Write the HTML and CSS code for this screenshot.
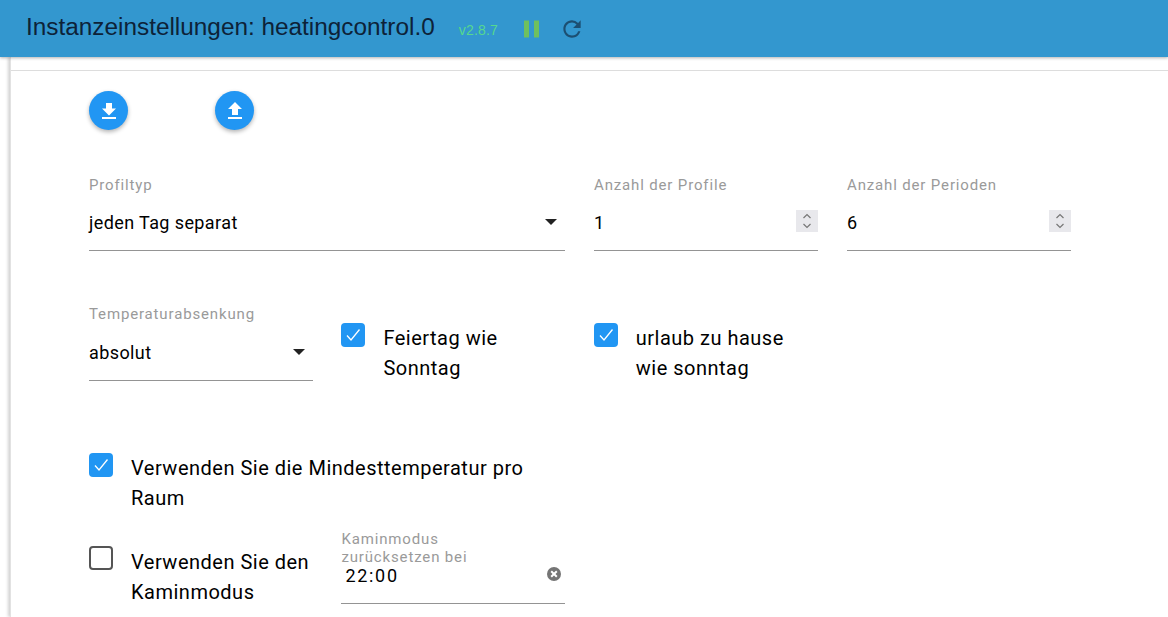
FILE: index.html
```html
<!DOCTYPE html>
<html lang="de">
<head>
<meta charset="utf-8">
<title>Instanzeinstellungen</title>
<link rel="stylesheet" href="styles.css">
</head>
<body>
<header class="topbar">
  <h1 class="title">Instanzeinstellungen: heatingcontrol.0</h1>
  <span class="version">v2.8.7</span>
  <svg class="pause" width="18" height="18" viewBox="0 0 18 18"><rect x="1" y="0.5" width="5" height="17" fill="#6fc05e"/><rect x="11" y="0.5" width="5" height="17" fill="#6fc05e"/></svg>
  <svg class="reload" width="26" height="26" viewBox="0 0 24 24"><path fill="#1c4f72" d="M17.65 6.35A7.958 7.958 0 0 0 12 4c-4.42 0-7.99 3.58-7.99 8s3.57 8 7.99 8c3.73 0 6.84-2.55 7.73-6h-2.08A5.99 5.99 0 0 1 12 18c-3.31 0-6-2.69-6-6s2.69-6 6-6c1.66 0 3.14.69 4.22 1.78L13 11h7V4l-2.35 2.35z"/></svg>
</header>
<div class="sheet">
  <div class="tabline"></div>
  <main class="content">
    <div class="fabs">
      <button class="fab" type="button"><svg width="24" height="24" viewBox="0 0 24 24"><path fill="#fff" d="M19 9.5h-4V4H9v5.5H5l7 7 7-7zM5 18v2h14v-2H5z"/></svg></button>
      <button class="fab" type="button"><svg width="24" height="24" viewBox="0 0 24 24"><path fill="#fff" d="M9 16h6v-6h4l-7-7-7 7h4v6zm-4 2h14v2H5v-2z"/></svg></button>
    </div>
    <div class="row row-one">
      <div class="field">
        <label class="label">Profiltyp</label>
        <div class="control"><span>jeden Tag separat</span><i class="caret"></i></div>
      </div>
      <div class="field">
        <label class="label">Anzahl der Profile</label>
        <div class="control"><span>1</span><span class="spin"><svg width="12" height="20" viewBox="0 0 12 20"><path fill="none" stroke="#777" stroke-width="1.2" d="M2.5 7 6 3.5 9.500 7M2.500 13 6 16.500 9.500 13"/></svg></span></div>
      </div>
      <div class="field">
        <label class="label">Anzahl der Perioden</label>
        <div class="control"><span>6</span><span class="spin"><svg width="12" height="20" viewBox="0 0 12 20"><path fill="none" stroke="#777" stroke-width="1.2" d="M2.5 7 6 3.5 9.500 7M2.500 13 6 16.500 9.500 13"/></svg></span></div>
      </div>
    </div>
    <div class="row row-two">
      <div class="field">
        <label class="label">Temperaturabsenkung</label>
        <div class="control"><span>absolut</span><i class="caret"></i></div>
      </div>
      <div class="check">
        <span class="box on"><svg width="24" height="24" viewBox="0 0 24 24"><path fill="none" stroke="#fff" stroke-width="1.3" d="M6 12.500 10 17 18.500 6.500"/></svg></span>
        <span class="check-text">Feiertag wie Sonntag</span>
      </div>
      <div class="check">
        <span class="box on"><svg width="24" height="24" viewBox="0 0 24 24"><path fill="none" stroke="#fff" stroke-width="1.3" d="M6 12.500 10 17 18.500 6.500"/></svg></span>
        <span class="check-text">urlaub zu hause wie sonntag</span>
      </div>
    </div>
    <div class="row row-three">
      <div class="check">
        <span class="box on"><svg width="24" height="24" viewBox="0 0 24 24"><path fill="none" stroke="#fff" stroke-width="1.3" d="M6 12.500 10 17 18.500 6.500"/></svg></span>
        <span class="check-text">Verwenden Sie die Mindesttemperatur pro Raum</span>
      </div>
    </div>
    <div class="row row-four">
      <div class="check">
        <span class="box"></span>
        <span class="check-text">Verwenden Sie den Kaminmodus</span>
      </div>
      <div class="field">
        <label class="label label-multi">Kaminmodus<br>zurücksetzen bei</label>
        <div class="control time"><span class="time-value">22:00</span>
          <svg class="clear" width="16" height="16" viewBox="0 0 16 16"><circle cx="8" cy="8" r="7" fill="#757575"/><path stroke="#fff" stroke-width="2" d="M5.200 5.200l5.600 5.600M10.800 5.200l-5.600 5.600"/></svg>
        </div>
      </div>
    </div>
  </main>
</div>
</body>
</html>
```

FILE: styles.css
```css
* { box-sizing: border-box; }
html, body { margin: 0; height: 100%; overflow: hidden; background: #fff; }
body { font-family: Roboto, "Noto Sans", sans-serif; color: #000; }

.topbar {
  height: 57px;
  background: #3397cf;
  display: flex;
  align-items: center;
  padding-left: 26px;
  position: relative;
  z-index: 2;
  box-shadow: 0 1px 3px rgba(0,0,0,.3);
}
.title {
  margin: 0;
  font: 400 24.35px "Liberation Sans", Arial, sans-serif;
  color: #0d2238;
  position: relative;
  top: -2px;
}
.version {
  margin-left: 24px;
  font: 400 14px "Liberation Sans", Arial, sans-serif;
  color: #56d88e;
  letter-spacing: .2px;
  position: relative;
  top: 1px;
}
.pause { margin-left: 25px; }
.reload { margin-left: 18px; }

.sheet {
  margin-left: 10px;
  height: 560px;
  background: #fff;
  border-left: 1px solid #e2e2e2;
  box-shadow: -2px 0 3px rgba(0,0,0,.18);
}
.tabline { height: 14px; border-bottom: 1px solid #ddd; }
.content { padding: 20px 0 0 78px; }

.fabs { display: flex; gap: 87px; }
.fab {
  width: 39px;
  height: 39px;
  border: 0;
  padding: 0;
  border-radius: 50%;
  background: #2196f3;
  box-shadow: 0 2px 4px rgba(0,0,0,.3);
  display: flex;
  align-items: center;
  justify-content: center;
}

.row { display: grid; column-gap: 28.4px; }
.row-one { grid-template-columns: 476px 224px 224px; column-gap: 29px; margin-top: 45px; }
.row-two { grid-template-columns: repeat(3, 224px); margin-top: 53px; }
.row-three { grid-template-columns: 476px; margin-top: 70px; }
.row-four { grid-template-columns: repeat(2, 224px); margin-top: 15px; }

.field { display: flex; flex-direction: column; }
.label {
  font-size: 15px;
  line-height: 20px;
  height: 20px;
  color: #9a9a9a;
  letter-spacing: .85px;
}
.control {
  height: 56px;
  display: flex;
  align-items: center;
  justify-content: space-between;
  font-size: 18px;
  letter-spacing: .4px;
  border-bottom: 1px solid #949494;
}
.row-two .control { height: 57px; }
.caret {
  width: 0;
  height: 0;
  margin-right: 8px;
  margin-top: -1px;
  border-left: 6px solid transparent;
  border-right: 6px solid transparent;
  border-top: 6px solid #222;
}
.spin {
  width: 22px;
  height: 22px;
  margin-top: -3px;
  background: #e8e8ec;
  display: flex;
  align-items: center;
  justify-content: center;
}
.check { display: flex; align-items: flex-start; }
.row-two .check { padding-top: 19px; }
.box {
  flex: none;
  width: 24px;
  height: 24px;
  border-radius: 4px;
  border: 2px solid #555;
  display: block;
}
.box.on { background: #2196f3; border: 0; }
.box svg { display: block; }
.check-text {
  margin-left: 18px;
  font-size: 20px;
  line-height: 30px;
  letter-spacing: .5px;
}
.row-four .check { padding-top: 18px; }
.row-four .check-text { margin-top: 1px; }
.label-multi { height: auto; line-height: 18px; padding-top: 2px; }
.time {
  height: 38px;
  padding: 0 3px 19px 4px;
}
.time-value { letter-spacing: 1.7px; }
.clear { margin-top: -3px; }
```
